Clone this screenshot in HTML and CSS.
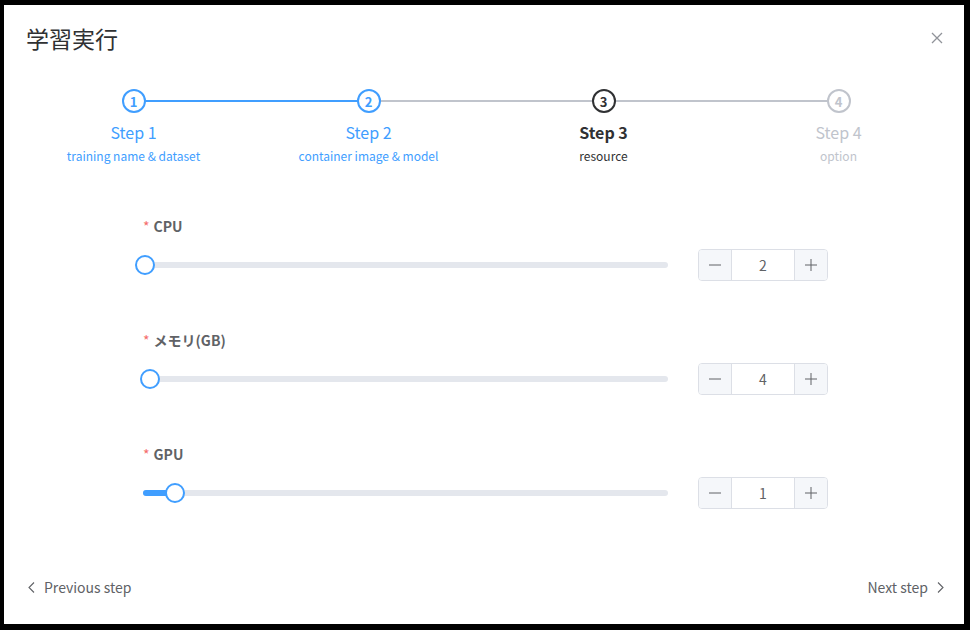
FILE: index.html
```html
<!DOCTYPE html>
<html lang="ja">
<head>
<meta charset="utf-8">
<title>学習実行</title>
<link rel="stylesheet" href="styles.css">
</head>
<body>
<div class="modal">
  <div class="header">
    <h1 class="title">学習実行</h1>
    <button class="close" aria-label="close">
      <svg width="12" height="12" viewBox="0 0 12 12"><path d="M1 1L11 11M11 1L1 11" stroke="#909399" stroke-width="1.3" fill="none"/></svg>
    </button>
  </div>

  <div class="steps">
    <div class="step done">
      <div class="head"><span class="line blue"></span><span class="circle">1</span></div>
      <div class="stitle">Step 1</div>
      <div class="sdesc">training name &amp; dataset</div>
    </div>
    <div class="step done">
      <div class="head"><span class="line"></span><span class="circle">2</span></div>
      <div class="stitle">Step 2</div>
      <div class="sdesc">container image &amp; model</div>
    </div>
    <div class="step active">
      <div class="head"><span class="line"></span><span class="circle">3</span></div>
      <div class="stitle">Step 3</div>
      <div class="sdesc">resource</div>
    </div>
    <div class="step wait">
      <div class="head"><span class="circle">4</span></div>
      <div class="stitle">Step 4</div>
      <div class="sdesc">option</div>
    </div>
  </div>

  <div class="form">
    <div class="item">
      <div class="label"><span class="req">*</span>CPU</div>
      <div class="control">
        <div class="slider">
          <div class="runway">
            <div class="bar" style="width:0.4%"></div>
            <div class="thumb" style="left:0.4%"></div>
          </div>
        </div>
        <div class="number">
          <span class="btn"><svg width="12" height="12" viewBox="0 0 12 12"><path d="M0 6H12" stroke="#606266" stroke-width="1"/></svg></span>
          <span class="val">2</span>
          <span class="btn"><svg width="12" height="12" viewBox="0 0 12 12"><path d="M0 6H12M6 0V12" stroke="#606266" stroke-width="1"/></svg></span>
        </div>
      </div>
    </div>
    <div class="item">
      <div class="label"><span class="req">*</span>メモリ(GB)</div>
      <div class="control">
        <div class="slider">
          <div class="runway">
            <div class="bar" style="width:1.3%"></div>
            <div class="thumb" style="left:1.3%"></div>
          </div>
        </div>
        <div class="number">
          <span class="btn"><svg width="12" height="12" viewBox="0 0 12 12"><path d="M0 6H12" stroke="#606266" stroke-width="1"/></svg></span>
          <span class="val">4</span>
          <span class="btn"><svg width="12" height="12" viewBox="0 0 12 12"><path d="M0 6H12M6 0V12" stroke="#606266" stroke-width="1"/></svg></span>
        </div>
      </div>
    </div>
    <div class="item">
      <div class="label"><span class="req">*</span>GPU</div>
      <div class="control">
        <div class="slider">
          <div class="runway">
            <div class="bar" style="width:6.1%"></div>
            <div class="thumb" style="left:6.1%"></div>
          </div>
        </div>
        <div class="number">
          <span class="btn"><svg width="12" height="12" viewBox="0 0 12 12"><path d="M0 6H12" stroke="#606266" stroke-width="1"/></svg></span>
          <span class="val">1</span>
          <span class="btn"><svg width="12" height="12" viewBox="0 0 12 12"><path d="M0 6H12M6 0V12" stroke="#606266" stroke-width="1"/></svg></span>
        </div>
      </div>
    </div>
  </div>

  <div class="footer">
    <a class="nav prev"><svg width="7" height="11" viewBox="0 0 7 11"><path d="M6 0.5L1 5.5L6 10.5" stroke="#606266" stroke-width="1.1" fill="none"/></svg>Previous step</a>
    <a class="nav next">Next step<svg width="7" height="11" viewBox="0 0 7 11"><path d="M1 0.5L6 5.5L1 10.5" stroke="#606266" stroke-width="1.1" fill="none"/></svg></a>
  </div>
</div>
</body>
</html>
```

FILE: styles.css
```css
* { box-sizing: border-box; }
html, body { margin: 0; padding: 0; }
body {
  background: #000;
  width: 970px;
  height: 630px;
  padding: 5px 6px 6px 4px;
  font-family: "Noto Sans CJK JP", "Noto Sans", sans-serif;
  color: #606266;
}
.modal {
  background: #fff;
  width: 960px;
  height: 619px;
  display: flex;
  flex-direction: column;
}
.header {
  display: flex;
  justify-content: space-between;
  align-items: center;
  padding: 17px 22px 0 22px;
  height: 49px;
}
.title {
  margin: 0;
  font-size: 23px;
  font-weight: 400;
  line-height: 32px;
  color: #303133;
}
.close {
  border: 0;
  background: none;
  padding: 0;
  width: 12px;
  height: 12px;
  display: flex;
  margin-right: -1px;
}
.steps {
  display: flex;
  margin: 35px 8px 0 12px;
}
.step {
  flex: 1;
  text-align: center;
}
.head {
  position: relative;
  height: 24px;
  display: flex;
  justify-content: center;
}
.line {
  position: absolute;
  top: 11px;
  left: 50%;
  width: 100%;
  height: 2px;
  background: #C0C4CC;
}
.line.blue { background: #409EFF; }
.circle {
  position: relative;
  z-index: 1;
  width: 24px;
  height: 24px;
  border-radius: 50%;
  border: 2px solid #C0C4CC;
  background: #fff;
  display: flex;
  align-items: center;
  justify-content: center;
  font-size: 13px;
  font-weight: 700;
  color: #C0C4CC;
  line-height: 1;
}
.stitle {
  margin-top: 7px;
  font-size: 16px;
  line-height: 24px;
  color: #C0C4CC;
}
.sdesc {
  margin-top: 3px;
  font-size: 12px;
  line-height: 18px;
  color: #C0C4CC;
}
.step.done .circle { border-color: #409EFF; color: #409EFF; }
.step.done .stitle, .step.done .sdesc { color: #409EFF; }
.step.active .circle { border-color: #303133; color: #303133; }
.step.active .stitle { color: #303133; font-weight: 700; }
.step.active .sdesc { color: #303133; }

.form {
  padding: 0 136px 0 139px;
  margin-top: 51px;
  display: flex;
  flex-direction: column;
  gap: 49px;
}
.label {
  font-size: 14px;
  font-weight: 700;
  line-height: 20px;
  color: #606266;
  display: flex;
  align-items: center;
}
.req {
  color: #F56C6C;
  margin-right: 4px;
  font-weight: 400;
}
.control {
  margin-top: 13px;
  display: flex;
  align-items: center;
  justify-content: space-between;
  height: 32px;
}
.slider {
  width: 525px;
}
.runway {
  position: relative;
  height: 6px;
  border-radius: 3px;
  background: #E4E7ED;
}
.bar {
  height: 6px;
  border-radius: 3px 0 0 3px;
  background: #409EFF;
}
.thumb {
  position: absolute;
  top: 50%;
  width: 20px;
  height: 20px;
  margin: -10px 0 0 -10px;
  border: 2px solid #409EFF;
  border-radius: 50%;
  background: #fff;
}
.number {
  width: 130px;
  height: 32px;
  border: 1px solid #DCDFE6;
  border-radius: 4px;
  display: flex;
  overflow: hidden;
}
.btn {
  width: 33px;
  background: #F5F7FA;
  display: flex;
  align-items: center;
  justify-content: center;
}
.btn:first-child { border-right: 1px solid #DCDFE6; }
.btn:last-child { border-left: 1px solid #DCDFE6; }
.val {
  flex: 1;
  display: flex;
  align-items: center;
  justify-content: center;
  font-size: 14px;
  color: #606266;
}
.footer {
  margin-top: auto;
  display: flex;
  justify-content: space-between;
  align-items: center;
  padding: 0 20px 27px 24px;
}
.nav {
  display: flex;
  align-items: center;
  gap: 9px;
  font-size: 14px;
  line-height: 20px;
  color: #606266;
}
```
